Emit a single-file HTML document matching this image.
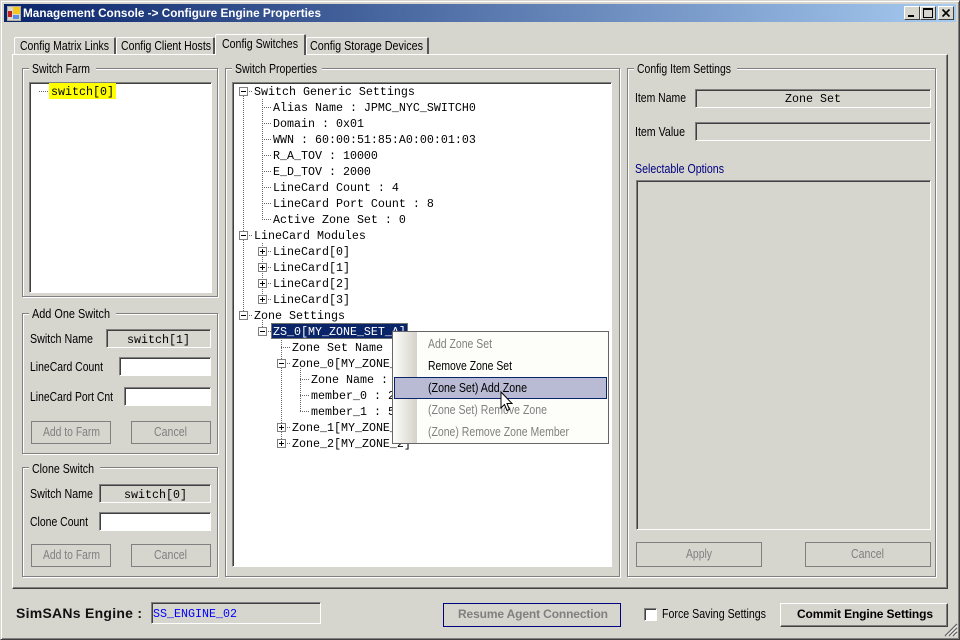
<!DOCTYPE html>
<html><head><meta charset="utf-8"><title>Management Console</title>
<style>
html,body{margin:0;padding:0;width:960px;height:640px;overflow:hidden;background:#d6d5ce}
div{position:absolute;box-sizing:border-box}
svg{position:absolute;left:0;top:0}
.g{border:1px solid #808080;box-shadow:1px 1px 0 #fff,inset 1px 1px 0 #fff}
.s{background:#d6d5ce;border:1px solid;border-color:#808080 #fff #fff #808080;box-shadow:inset 1px 1px 0 #404040}
.d{border:1px solid #808080}
.t{font:12.8px "Liberation Sans",sans-serif;fill:#000}
.dis{fill:#808080}
.m{font:11.67px "Liberation Mono",monospace;fill:#000}
.b{font:bold 12px "Liberation Sans",sans-serif;fill:#000}
.tab{background:#d6d5ce;border-top:1px solid #fff;border-left:1px solid #fff;border-right:2px solid #555;border-radius:2px 2px 0 0}
</style></head><body>
<!-- window -->
<div style="left:0;top:0;width:960px;height:640px;border:1px solid;border-color:#d6d5ce #404040 #404040 #d6d5ce;box-shadow:inset 1px 1px 0 #fff,inset -1px -1px 0 #808080"></div>
<div style="left:4px;top:4px;width:952px;height:18px;background:linear-gradient(90deg,#0a246a,#a6caf0)"></div>
<!-- window buttons -->
<div style="left:904px;top:6px;width:16px;height:14px;background:#d6d5ce;border:1px solid;border-color:#fff #404040 #404040 #fff"></div>
<div style="left:920px;top:6px;width:16px;height:14px;background:#d6d5ce;border:1px solid;border-color:#fff #404040 #404040 #fff"></div>
<div style="left:938px;top:6px;width:16px;height:14px;background:#d6d5ce;border:1px solid;border-color:#fff #404040 #404040 #fff"></div>
<!-- tabs -->
<div class="tab" style="left:14px;top:37px;width:102px;height:18px"></div>
<div class="tab" style="left:116px;top:37px;width:99px;height:18px"></div>
<div class="tab" style="left:306px;top:37px;width:123px;height:18px"></div>
<!-- tab panel -->
<div style="left:12px;top:54px;width:936px;height:535px;border:1px solid;border-color:#fff #404040 #404040 #fff;box-shadow:inset -1px -1px 0 #808080"></div>
<div class="tab" style="left:215px;top:34px;width:91px;height:21px;z-index:1"></div>
<!-- Switch Farm -->
<div class="g" style="left:22px;top:68px;width:196px;height:229px"></div>
<div class="s" style="left:29px;top:82px;width:183px;height:211px;background:#fff"></div>
<div style="left:49px;top:83px;width:67px;height:16px;background:#ff0"></div>
<!-- Add One Switch -->
<div class="g" style="left:22px;top:313px;width:196px;height:141px"></div>
<div class="s" style="left:106px;top:329px;width:105px;height:19px"></div>
<div class="s" style="left:119px;top:357px;width:92px;height:19px;background:#fff"></div>
<div class="s" style="left:124px;top:387px;width:87px;height:19px;background:#fff"></div>
<div class="d" style="left:31px;top:421px;width:80px;height:23px"></div>
<div class="d" style="left:131px;top:421px;width:80px;height:23px"></div>
<!-- Clone Switch -->
<div class="g" style="left:22px;top:467px;width:196px;height:110px"></div>
<div class="s" style="left:99px;top:484px;width:112px;height:19px"></div>
<div class="s" style="left:99px;top:512px;width:112px;height:19px;background:#fff"></div>
<div class="d" style="left:31px;top:544px;width:80px;height:23px"></div>
<div class="d" style="left:131px;top:544px;width:80px;height:23px"></div>
<!-- Switch Properties -->
<div class="g" style="left:225px;top:68px;width:395px;height:509px"></div>
<div class="s" style="left:232px;top:82px;width:380px;height:485px;background:#fff"></div>
<!-- Config Item -->
<div class="g" style="left:627px;top:68px;width:309px;height:509px"></div>
<div class="s" style="left:695px;top:89px;width:236px;height:19px"></div>
<div class="s" style="left:695px;top:122px;width:236px;height:19px"></div>
<div class="s" style="left:636px;top:180px;width:295px;height:350px"></div>
<div class="d" style="left:636px;top:542px;width:126px;height:25px"></div>
<div class="d" style="left:805px;top:542px;width:126px;height:25px"></div>
<!-- bottom -->
<div class="s" style="left:151px;top:602px;width:170px;height:22px"></div>
<div style="left:443px;top:603px;width:178px;height:24px;border:1px solid #000080"></div>
<div class="s" style="left:644px;top:608px;width:13px;height:13px;background:#fff"></div>
<div style="left:780px;top:603px;width:168px;height:24px;border:1px solid;border-color:#fff #404040 #404040 #fff;box-shadow:inset -1px -1px 0 #808080"></div>

<svg width="960" height="640" viewBox="0 0 960 640" style="z-index:2">
<!-- title icon -->
<g shape-rendering="crispEdges">
<rect x="7" y="6" width="14" height="15" fill="#b0ad9c"/>
<rect x="8" y="7" width="12" height="13" fill="#d8d8d0"/>
<rect x="8" y="11" width="4" height="6" fill="#c02020"/>
<rect x="13" y="7" width="7" height="7" fill="#f4c820"/>
<rect x="13" y="15" width="6" height="4" fill="#5a8ee0"/>
</g>
<text class="b" x="23" y="17" textLength="298" lengthAdjust="spacingAndGlyphs" style="fill:#fff">Management Console -&gt; Configure Engine Properties</text>
<!-- window button glyphs -->
<g shape-rendering="crispEdges">
<rect x="908" y="15" width="6" height="2" fill="#000"/>
<rect x="923.5" y="8.5" width="9" height="9" fill="none" stroke="#000"/>
<rect x="923" y="8" width="10" height="2" fill="#000"/>
</g>
<path d="M942.5 9.5l7 7M949.5 9.5l-7 7" stroke="#000" stroke-width="1.6" fill="none"/>

<!-- tabs text -->
<text class="t" x="20" y="50" textLength="89" lengthAdjust="spacingAndGlyphs">Config Matrix Links</text>
<text class="t" x="121" y="50" textLength="90" lengthAdjust="spacingAndGlyphs">Config Client Hosts</text>
<text class="t" x="222" y="48" textLength="76" lengthAdjust="spacingAndGlyphs">Config Switches</text>
<text class="t" x="310" y="50" textLength="113" lengthAdjust="spacingAndGlyphs">Config Storage Devices</text>

<!-- legends -->
<g>
<rect x="29" y="62" width="67" height="12" fill="#d6d5ce"/>
<rect x="232" y="62" width="90" height="12" fill="#d6d5ce"/>
<rect x="634" y="62" width="103" height="12" fill="#d6d5ce"/>
<rect x="29" y="308" width="87" height="12" fill="#d6d5ce"/>
<rect x="29" y="462" width="71" height="12" fill="#d6d5ce"/>
</g>
<text class="t" x="32" y="73" textLength="58" lengthAdjust="spacingAndGlyphs">Switch Farm</text>
<text class="t" x="235" y="73" textLength="82" lengthAdjust="spacingAndGlyphs">Switch Properties</text>
<text class="t" x="637" y="73" textLength="94" lengthAdjust="spacingAndGlyphs">Config Item Settings</text>
<text class="t" x="32" y="318" textLength="78" lengthAdjust="spacingAndGlyphs">Add One Switch</text>
<text class="t" x="32" y="473" textLength="62" lengthAdjust="spacingAndGlyphs">Clone Switch</text>

<!-- left labels -->
<text class="t" x="30" y="343" textLength="63" lengthAdjust="spacingAndGlyphs">Switch Name</text>
<text class="t" x="30" y="371" textLength="73" lengthAdjust="spacingAndGlyphs">LineCard Count</text>
<text class="t" x="30" y="401" textLength="83" lengthAdjust="spacingAndGlyphs">LineCard Port Cnt</text>
<text class="t dis" x="43" y="436" textLength="57" lengthAdjust="spacingAndGlyphs">Add to Farm</text>
<text class="t dis" x="154" y="436" textLength="33" lengthAdjust="spacingAndGlyphs">Cancel</text>
<text class="t" x="30" y="498" textLength="63" lengthAdjust="spacingAndGlyphs">Switch Name</text>
<text class="t" x="30" y="526" textLength="58" lengthAdjust="spacingAndGlyphs">Clone Count</text>
<text class="t dis" x="43" y="559" textLength="57" lengthAdjust="spacingAndGlyphs">Add to Farm</text>
<text class="t dis" x="154" y="559" textLength="33" lengthAdjust="spacingAndGlyphs">Cancel</text>
<text class="m" x="127" y="343">switch[1]</text>
<text class="m" x="124" y="498">switch[0]</text>

<!-- farm tree -->
<path d="M39 91.5h10" stroke="#666" stroke-dasharray="1 1" fill="none" shape-rendering="crispEdges"/>
<text class="m" x="51" y="95">switch[0]</text>

<!-- right panel -->
<text class="t" x="635" y="102" textLength="51" lengthAdjust="spacingAndGlyphs">Item Name</text>
<text class="t" x="635" y="136" textLength="50" lengthAdjust="spacingAndGlyphs">Item Value</text>
<text class="t" x="635" y="173" textLength="89" lengthAdjust="spacingAndGlyphs" style="fill:#000080">Selectable Options</text>
<text class="m" x="785" y="102">Zone Set</text>
<text class="t dis" x="686" y="558" textLength="26" lengthAdjust="spacingAndGlyphs">Apply</text>
<text class="t dis" x="851" y="558" textLength="33" lengthAdjust="spacingAndGlyphs">Cancel</text>

<!-- bottom text -->
<text class="b" x="16" y="618" textLength="126" lengthAdjust="spacing" style="font-size:14px;fill:#111">SimSANs Engine :</text>
<text class="m" x="153" y="617" style="fill:#0000ff">SS_ENGINE_02</text>
<text class="b" x="458" y="618" textLength="150" lengthAdjust="spacing" style="fill:#808080">Resume Agent Connection</text>
<text class="t" x="662" y="618" textLength="104" lengthAdjust="spacingAndGlyphs">Force Saving Settings</text>
<text class="b" x="797" y="618" textLength="136" lengthAdjust="spacing">Commit Engine Settings</text>
<path d="M945 636l12-12M949 636l8-8M953 636l4-4" stroke="#666" stroke-width="1.4" fill="none"/>
<path d="M946.5 636l10.5-10.5M950.5 636l6.5-6.5M954.5 636l2.5-2.5" stroke="#fff" stroke-width=".8" fill="none"/>

<!-- tree lines -->
<g stroke="#666" stroke-dasharray="1 1" fill="none" shape-rendering="crispEdges">
<path d="M243.5 96v135M243.5 240v71"/>
<path d="M247 91.5h6M247 235.5h6M247 315.5h6"/>
<path d="M262.5 99v120.5M262.5 243v52"/>
<path d="M262 107.5h10M262 123.5h10M262 139.5h10M262 155.5h10M262 171.5h10M262 187.5h10M262 203.5h10M262 219.5h10"/>
<path d="M266 251.5h6M266 267.5h6M266 283.5h6M266 299.5h6M266 331.5h5"/>
<path d="M262.5 320v7"/>
<path d="M281.5 336v103"/>
<path d="M281 347.5h10M285 363.5h6M285 427.5h6M285 443.5h6"/>
<path d="M300.5 368v43.5"/>
<path d="M300 379.5h10M300 395.5h10M300 411.5h10"/>
</g>
<!-- expander boxes -->
<g fill="#fff" stroke="#808080" shape-rendering="crispEdges">
<rect x="239.5" y="87.5" width="8" height="8"/>
<rect x="239.5" y="231.5" width="8" height="8"/>
<rect x="239.5" y="311.5" width="8" height="8"/>
<rect x="258.5" y="247.5" width="8" height="8"/>
<rect x="258.5" y="263.5" width="8" height="8"/>
<rect x="258.5" y="279.5" width="8" height="8"/>
<rect x="258.5" y="295.5" width="8" height="8"/>
<rect x="258.5" y="327.5" width="8" height="8"/>
<rect x="277.5" y="359.5" width="8" height="8"/>
<rect x="277.5" y="423.5" width="8" height="8"/>
<rect x="277.5" y="439.5" width="8" height="8"/>
</g>
<g stroke="#000" shape-rendering="crispEdges" fill="none">
<path d="M241 91.5h5M241 235.5h5M241 315.5h5M260 331.5h5M279 363.5h5"/>
<path d="M260 251.5h5M262.5 249v5M260 267.5h5M262.5 265v5M260 283.5h5M262.5 281v5M260 299.5h5M262.5 297v5"/>
<path d="M279 427.5h5M281.5 425v5M279 443.5h5M281.5 441v5"/>
</g>
<!-- tree text -->
<text class="m" x="254" y="95">Switch Generic Settings</text>
<text class="m" x="273" y="111">Alias Name : JPMC_NYC_SWITCH0</text>
<text class="m" x="273" y="127">Domain : 0x01</text>
<text class="m" x="273" y="143">WWN : 60:00:51:85:A0:00:01:03</text>
<text class="m" x="273" y="159">R_A_TOV : 10000</text>
<text class="m" x="273" y="175">E_D_TOV : 2000</text>
<text class="m" x="273" y="191">LineCard Count : 4</text>
<text class="m" x="273" y="207">LineCard Port Count : 8</text>
<text class="m" x="273" y="223">Active Zone Set : 0</text>
<text class="m" x="254" y="239">LineCard Modules</text>
<text class="m" x="273" y="255">LineCard[0]</text>
<text class="m" x="273" y="271">LineCard[1]</text>
<text class="m" x="273" y="287">LineCard[2]</text>
<text class="m" x="273" y="303">LineCard[3]</text>
<text class="m" x="254" y="319">Zone Settings</text>
<rect x="271" y="323" width="137" height="16" fill="#0a246a"/>
<rect x="271.5" y="323.5" width="136" height="15" fill="none" stroke="#d6c27a" stroke-dasharray="1 1" shape-rendering="crispEdges"/>
<text class="m" x="273" y="335" style="fill:#fff">ZS_0[MY_ZONE_SET_A]</text>
<text class="m" x="292" y="351">Zone Set Name</text>
<text class="m" x="292" y="367">Zone_0[MY_ZONE_</text>
<text class="m" x="311" y="383">Zone Name :</text>
<text class="m" x="311" y="399">member_0 : 2</text>
<text class="m" x="311" y="415">member_1 : 5</text>
<text class="m" x="292" y="431">Zone_1[MY_ZONE_</text>
<text class="m" x="292" y="447">Zone_2[MY_ZONE_2]</text>
</svg>

<!-- context menu -->
<div style="z-index:3;left:392px;top:331px;width:217px;height:113px;background:#fdfdfa;border:1px solid #666"></div>
<div style="z-index:3;left:393px;top:332px;width:24px;height:111px;background:linear-gradient(90deg,#fdfdfa,#d4d2ca)"></div>
<div style="z-index:3;left:394px;top:377px;width:213px;height:22px;background:#b8bbd3;border:1px solid #0a246a"></div>
<svg width="960" height="640" viewBox="0 0 960 640" style="z-index:4">
<text class="t dis" x="428" y="348" textLength="64" lengthAdjust="spacingAndGlyphs">Add Zone Set</text>
<text class="t" x="428" y="370" textLength="84" lengthAdjust="spacingAndGlyphs">Remove Zone Set</text>
<text class="t" x="428" y="392" textLength="99" lengthAdjust="spacingAndGlyphs">(Zone Set) Add Zone</text>
<text class="t dis" x="428" y="414" textLength="119" lengthAdjust="spacingAndGlyphs">(Zone Set) Remove Zone</text>
<text class="t dis" x="428" y="436" textLength="141" lengthAdjust="spacingAndGlyphs">(Zone) Remove Zone Member</text>
<path d="M501 392v16l3.5-3.5 2.5 6 2.5-1-2.5-6h5z" fill="#fff" stroke="#000" stroke-width="1"/>
</svg>
</body></html>
